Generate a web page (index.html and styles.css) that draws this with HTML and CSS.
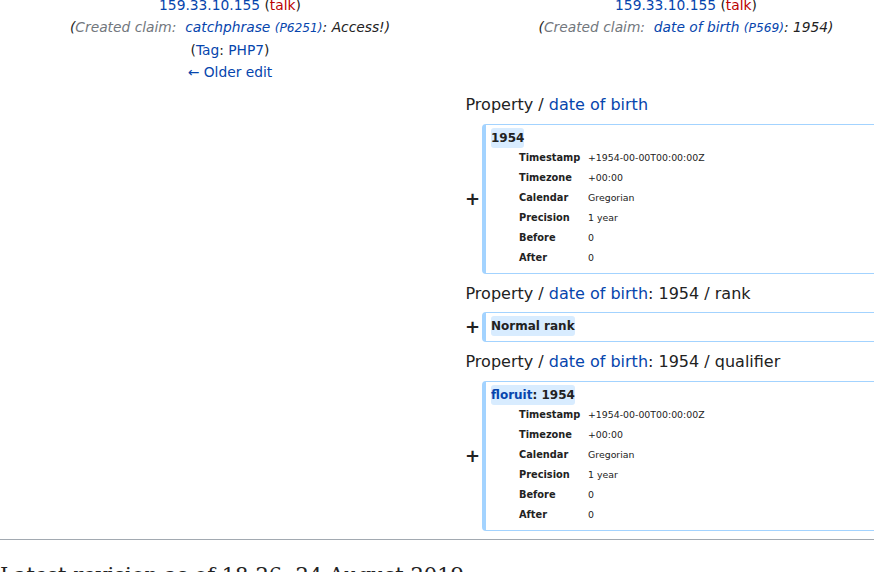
FILE: index.html
```html
<!DOCTYPE html>
<html>
<head>
<meta charset="utf-8">
<link rel="stylesheet" href="styles.css">
</head>
<body>
<div class="page">
  <div class="diff">
    <div class="otitle">
      <div><a href="#">159.33.10.155</a> (<a class="new" href="#">talk</a>)</div>
      <div class="comment">(<span class="autocomment">Created claim:&nbsp; </span><a href="#">catchphrase</a> <a class="pid" href="#">(P6251)</a>: Access!)</div>
      <div>(<a href="#">Tag</a>: <a href="#">PHP7</a>)</div>
      <div><a href="#">← Older edit</a></div>
    </div>
    <div class="ntitle">
      <div><a href="#">159.33.10.155</a> (<a class="new" href="#">talk</a>)</div>
      <div class="comment">(<span class="autocomment">Created claim:&nbsp; </span><a href="#">date of birth</a> <a class="pid" href="#">(P569)</a>: 1954)</div>
    </div>

    <div class="lineno first">Property / <a href="#">date of birth</a></div>
    <div class="marker">+</div>
    <div class="added">
      <div><span class="chg">1954</span></div>
      <div class="props">
        <div class="pk">Timestamp</div><div class="pv">+1954-00-00T00:00:00Z</div>
        <div class="pk">Timezone</div><div class="pv">+00:00</div>
        <div class="pk">Calendar</div><div class="pv">Gregorian</div>
        <div class="pk">Precision</div><div class="pv">1 year</div>
        <div class="pk">Before</div><div class="pv">0</div>
        <div class="pk">After</div><div class="pv">0</div>
      </div>
    </div>

    <div class="lineno">Property / <a href="#">date of birth</a>: 1954 / rank</div>
    <div class="marker">+</div>
    <div class="added">
      <div><span class="chg">Normal rank</span></div>
    </div>

    <div class="lineno">Property / <a href="#">date of birth</a>: 1954 / qualifier</div>
    <div class="marker">+</div>
    <div class="added">
      <div><span class="chg"><a href="#">floruit</a>: 1954</span></div>
      <div class="props">
        <div class="pk">Timestamp</div><div class="pv">+1954-00-00T00:00:00Z</div>
        <div class="pk">Timezone</div><div class="pv">+00:00</div>
        <div class="pk">Calendar</div><div class="pv">Gregorian</div>
        <div class="pk">Precision</div><div class="pv">1 year</div>
        <div class="pk">Before</div><div class="pv">0</div>
        <div class="pk">After</div><div class="pv">0</div>
      </div>
    </div>
  </div>
  <div class="diff-hr"></div>
  <h2 class="rev-heading">Latest revision as of 18:26, 24 August 2019</h2>
</div>
</body>
</html>
```

FILE: styles.css
```css
html, body {
  margin: 0;
  padding: 0;
  overflow: hidden;
  background: #ffffff;
}
body {
  font-family: "DejaVu Sans", sans-serif;
  color: #222222;
}
a {
  color: #0645ad;
  text-decoration: none;
}
a.new {
  color: #ba0000;
}
.page {
  margin-top: -6px;
}
.diff {
  display: grid;
  grid-template-columns: 22px 434px 22px 434px;
  margin-left: 2px;
}
.otitle,
.ntitle {
  text-align: center;
  font-size: 13.8px;
  line-height: 22px;
}
.otitle {
  grid-column: 1 / 3;
}
.ntitle {
  grid-column: 3 / 5;
}
.comment {
  font-style: italic;
}
.autocomment {
  color: #72777d;
}
.pid {
  font-size: 12.2px;
}
.lineno {
  grid-column: 3 / 5;
  font-size: 16px;
  line-height: 19px;
  padding: 10px 0 9.5px 7.5px;
}
.lineno.first {
  padding-top: 12px;
}
.marker {
  grid-column: 3;
  align-self: center;
  text-align: right;
  font-weight: bold;
  font-size: 18px;
  line-height: 1;
}
.added {
  grid-column: 4;
  margin-left: 2px;
  border: 1px solid #a3d3ff;
  border-left-width: 4px;
  border-radius: 4px;
  padding: 3px 0 5px 5px;
  font-size: 12px;
  line-height: 20px;
}
.chg {
  display: inline-block;
  vertical-align: top;
  background: #d8ecff;
  border-radius: 3px;
  font-weight: bold;
  font-size: 12px;
  line-height: 20px;
}
.props {
  display: grid;
  grid-template-columns: 69px auto;
  margin-left: 28px;
}
.pk {
  font-weight: bold;
  font-size: 9.8px;
  line-height: 20px;
}
.pv {
  font-size: 9.4px;
  line-height: 20px;
}
.diff-hr {
  margin-top: 8px;
  border-top: 1px solid #a2a9b1;
}
.rev-heading {
  font-family: "DejaVu Serif", serif;
  font-size: 21px;
  font-weight: normal;
  margin: 23px 0 0 0;
}
```
